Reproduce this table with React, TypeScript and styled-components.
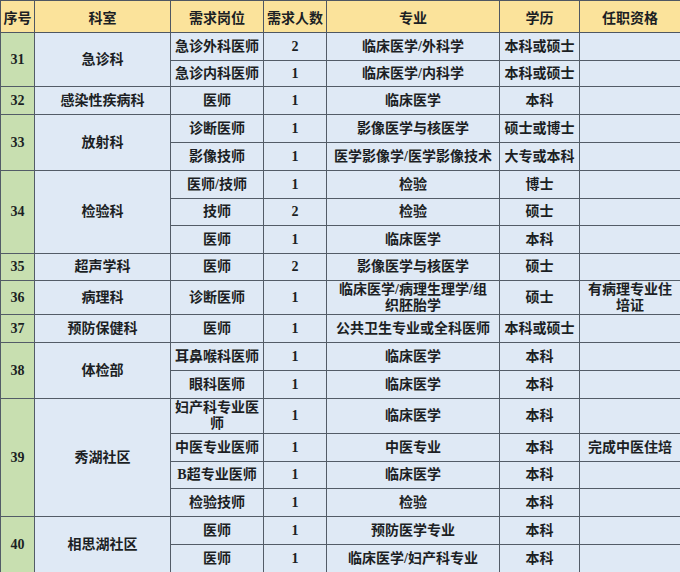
import styled, { createGlobalStyle } from "styled-components";

const GlobalStyle = createGlobalStyle`
  html, body {
    margin: 0;
    padding: 0;
    background: #dfe9f5;
  }
`;

const Table = styled.table`
  width: 680px;
  table-layout: fixed;
  border-collapse: collapse;
  font-family: "Liberation Serif", "Noto Sans CJK SC", serif;
  font-weight: bold;
  font-size: 14px;
  color: #1c1f24;
`;

const Row = styled.tr<{ h: number }>`
  height: ${(p) => p.h}px;
`;

const Head = styled.th`
  background: #fbe39b;
  border: 1px solid #4f5762;
  font-weight: bold;
  font-size: 14px;
  padding: 0;
  text-align: center;
  vertical-align: middle;
  white-space: nowrap;
`;

const Cell = styled.td<{ tone?: "green" }>`
  background: ${(p) => (p.tone === "green" ? "#c8dfb0" : "#dfe9f5")};
  border: 1px solid #535c67;
  padding: 0 2px;
  line-height: 16px;
  text-align: center;
  vertical-align: middle;
  white-space: nowrap;
`;

interface Post {
  post: string;
  count: number;
  major: string;
  edu: string;
  qual?: string;
  h: number;
}

interface Group {
  no: number;
  dept: string;
  posts: Post[];
}

const groups: Group[] = [
  {
    no: 31,
    dept: "急诊科",
    posts: [
      { post: "急诊外科医师", count: 2, major: "临床医学/外科学", edu: "本科或硕士", h: 28 },
      { post: "急诊内科医师", count: 1, major: "临床医学/内科学", edu: "本科或硕士", h: 26 },
    ],
  },
  {
    no: 32,
    dept: "感染性疾病科",
    posts: [{ post: "医师", count: 1, major: "临床医学", edu: "本科", h: 28 }],
  },
  {
    no: 33,
    dept: "放射科",
    posts: [
      { post: "诊断医师", count: 1, major: "影像医学与核医学", edu: "硕士或博士", h: 28 },
      { post: "影像技师", count: 1, major: "医学影像学/医学影像技术", edu: "大专或本科", h: 28 },
    ],
  },
  {
    no: 34,
    dept: "检验科",
    posts: [
      { post: "医师/技师", count: 1, major: "检验", edu: "博士", h: 28 },
      { post: "技师", count: 2, major: "检验", edu: "硕士", h: 27 },
      { post: "医师", count: 1, major: "临床医学", edu: "本科", h: 28 },
    ],
  },
  {
    no: 35,
    dept: "超声学科",
    posts: [{ post: "医师", count: 2, major: "影像医学与核医学", edu: "硕士", h: 27 }],
  },
  {
    no: 36,
    dept: "病理科",
    posts: [
      {
        post: "诊断医师",
        count: 1,
        major: "临床医学/病理生理学/组\n织胚胎学",
        edu: "硕士",
        qual: "有病理专业住\n培证",
        h: 34,
      },
    ],
  },
  {
    no: 37,
    dept: "预防保健科",
    posts: [{ post: "医师", count: 1, major: "公共卫生专业或全科医师", edu: "本科或硕士", h: 28 }],
  },
  {
    no: 38,
    dept: "体检部",
    posts: [
      { post: "耳鼻喉科医师", count: 1, major: "临床医学", edu: "本科", h: 28 },
      { post: "眼科医师", count: 1, major: "临床医学", edu: "本科", h: 28 },
    ],
  },
  {
    no: 39,
    dept: "秀湖社区",
    posts: [
      { post: "妇产科专业医\n师", count: 1, major: "临床医学", edu: "本科", h: 35 },
      { post: "中医专业医师", count: 1, major: "中医专业", edu: "本科", qual: "完成中医住培", h: 28 },
      { post: "B超专业医师", count: 1, major: "临床医学", edu: "本科", h: 27 },
      { post: "检验技师", count: 1, major: "检验", edu: "本科", h: 28 },
    ],
  },
  {
    no: 40,
    dept: "相思湖社区",
    posts: [
      { post: "医师", count: 1, major: "预防医学专业", edu: "本科", h: 28 },
      { post: "医师", count: 1, major: "临床医学/妇产科专业", edu: "本科", h: 28 },
    ],
  },
];

const columns = [
  { label: "序号", w: 34 },
  { label: "科室", w: 136 },
  { label: "需求岗位", w: 93 },
  { label: "需求人数", w: 63 },
  { label: "专业", w: 173 },
  { label: "学历", w: 80 },
  { label: "任职资格", w: 101 },
];

function Lines({ text }: { text?: string }) {
  if (!text) return null;
  const parts = text.split("\n");
  return (
    <>
      {parts.map((t, i) => (
        <span key={i}>
          {i > 0 && <br />}
          {t}
        </span>
      ))}
    </>
  );
}

export default function App() {
  return (
    <>
      <GlobalStyle />
      <Table>
        <colgroup>
          {columns.map((c) => (
            <col key={c.label} style={{ width: c.w }} />
          ))}
        </colgroup>
        <thead>
          <Row h={32}>
            {columns.map((c) => (
              <Head key={c.label}>{c.label}</Head>
            ))}
          </Row>
        </thead>
        <tbody>
          {groups.map((g) =>
            g.posts.map((p, i) => (
              <Row h={p.h} key={`${g.no}-${i}`}>
                {i === 0 && (
                  <>
                    <Cell tone="green" rowSpan={g.posts.length}>
                      {g.no}
                    </Cell>
                    <Cell rowSpan={g.posts.length}>{g.dept}</Cell>
                  </>
                )}
                <Cell>
                  <Lines text={p.post} />
                </Cell>
                <Cell>{p.count}</Cell>
                <Cell>
                  <Lines text={p.major} />
                </Cell>
                <Cell>{p.edu}</Cell>
                <Cell>
                  <Lines text={p.qual} />
                </Cell>
              </Row>
            ))
          )}
        </tbody>
      </Table>
    </>
  );
}
